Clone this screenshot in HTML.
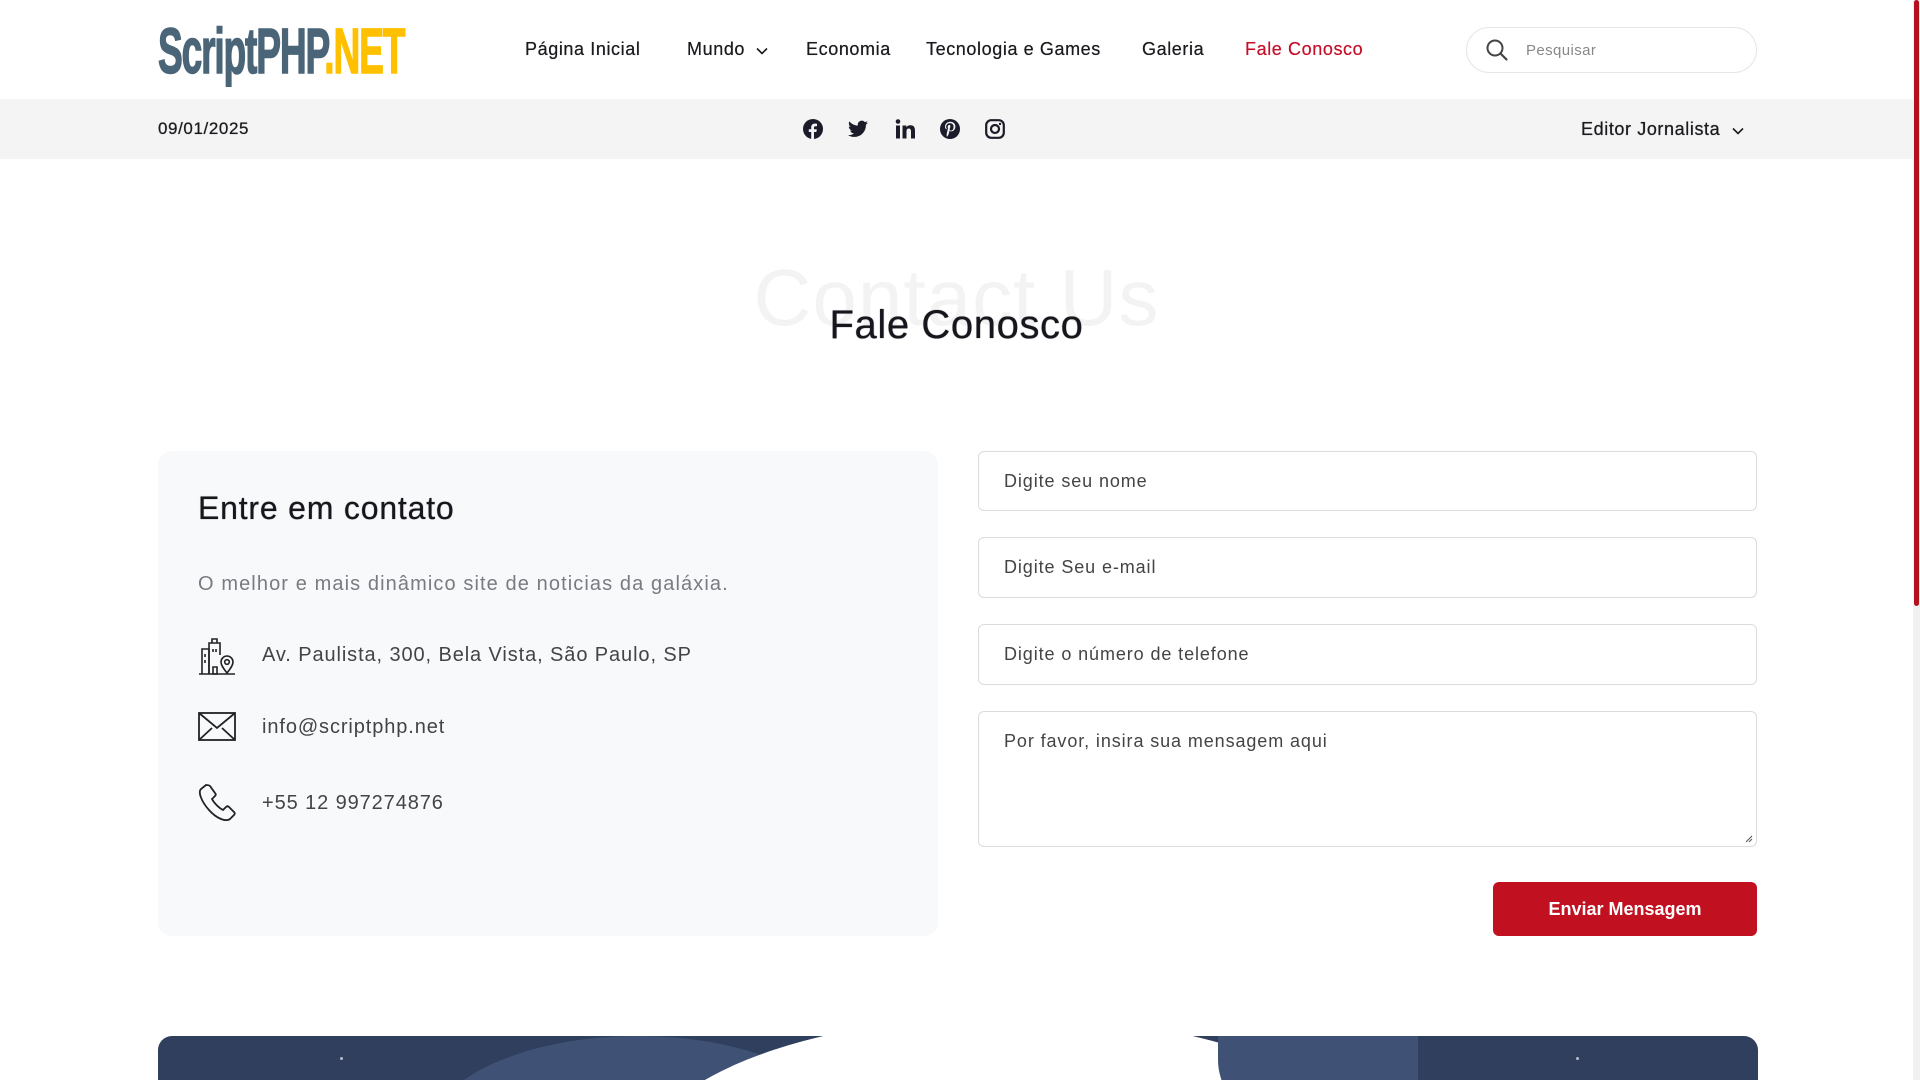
<!DOCTYPE html>
<html><head><meta charset="utf-8"><style>
*{margin:0;padding:0;box-sizing:border-box}
html,body{width:1920px;height:1080px;overflow:hidden}
body{background:#fff;font-family:"Liberation Sans",sans-serif;color:#1b1b1f;position:relative}
.abs{position:absolute}
.nav a{position:absolute;top:39px;font-size:18px;color:#1b1b1f;text-decoration:none;white-space:nowrap;letter-spacing:0.6px;text-shadow:0 0 0.5px #1b1b1f}
.topbar{position:absolute;left:0;top:99px;width:1913px;height:60px;background:#f4f4f4}
.inp{position:absolute;left:978px;width:779px;border:1px solid #dcdcdc;border-radius:6px;background:#fff;font-size:18px;color:#444;padding-left:25px;letter-spacing:0.9px}
.row{position:absolute;left:198px;font-size:20px;color:#444;letter-spacing:0.9px}
.row span{position:absolute;left:64px;white-space:nowrap}
</style></head><body>
<div class="abs" style="left:158px;top:16px;height:70px;width:260px;overflow:visible">
<div style="font-family:'Liberation Sans Narrow','Liberation Sans',sans-serif;font-weight:bold;font-size:64px;line-height:70px;letter-spacing:-2px;transform:scaleX(0.58);transform-origin:left;white-space:nowrap;color:#4a6478;-webkit-text-stroke:1.5px #4a6478">ScriptPHP<span style="color:#ffc000;-webkit-text-stroke:1.5px #ffc000">.NET</span></div>
</div>
<div class="nav">
<a style="left:525px">Página Inicial</a>
<a style="left:687px">Mundo <svg width="12" height="8" viewBox="0 0 12 8" style="margin-left:5px"><path d="M1 1.5l5 5 5-5" fill="none" stroke="#1b1b1f" stroke-width="1.6"/></svg></a>
<a style="left:806px">Economia</a>
<a style="left:926px">Tecnologia e Games</a>
<a style="left:1142px">Galeria</a>
<a style="left:1245px;color:#c4102b;text-shadow:0 0 0.5px #c4102b">Fale Conosco</a>
</div>
<div class="abs" style="left:1466px;top:27px;width:291px;height:46px;border:1px solid #e6e6e6;border-radius:23px">
<svg class="abs" style="left:18px;top:10px" width="24" height="24" viewBox="0 0 24 24"><circle cx="10" cy="10" r="7.5" fill="none" stroke="#444" stroke-width="2"/><path d="M15.5 15.5l6 6" stroke="#444" stroke-width="2.2" stroke-linecap="round"/></svg>
<div class="abs" style="left:59px;top:14px;font-size:15px;color:#888;letter-spacing:0.4px">Pesquisar</div>
</div>
<div class="topbar">
<div class="abs" style="left:158px;top:20px;font-size:17px;letter-spacing:0.6px;text-shadow:0 0 0.6px #1b1b1f">09/01/2025</div>
<svg class="abs" style="left:803px;top:20px" width="20" height="20" viewBox="0 0 20 20"><circle cx="10" cy="10" r="10" fill="#1b1b2a"/><path d="M11 20v-7h2.4l.4-2.8H11V8.5c0-.8.3-1.3 1.4-1.3H14V4.7c-.3 0-1.2-.1-2.2-.1-2.2 0-3.6 1.3-3.6 3.7v1.9H5.8V13h2.4v7z" fill="#f4f4f4"/></svg>
<svg class="abs" style="left:848px;top:21px" width="20" height="18" viewBox="0 0 24 20"><path d="M24 2.4c-.9.4-1.8.7-2.8.8 1-.6 1.8-1.6 2.2-2.7-1 .6-2 1-3.1 1.2C19.3.7 18 0 16.6 0c-2.7 0-4.9 2.2-4.9 4.9 0 .4 0 .8.1 1.1C7.7 5.8 4.1 3.9 1.7.9c-.4.7-.7 1.6-.7 2.5 0 1.7.9 3.2 2.2 4.1-.8 0-1.6-.2-2.2-.6v.1c0 2.4 1.7 4.4 3.9 4.8-.4.1-.8.2-1.3.2-.3 0-.6 0-.9-.1.6 2 2.4 3.4 4.6 3.4-1.7 1.3-3.8 2.1-6.1 2.1-.4 0-.8 0-1.2-.1 2.2 1.4 4.8 2.2 7.5 2.2 9.1 0 14-7.5 14-14v-.6c1-.7 1.8-1.6 2.4-2.5z" fill="#1b1b2a"/></svg>
<svg class="abs" style="left:895px;top:20px" width="20" height="20" viewBox="0 0 20 20"><rect x="1" y="6.5" width="4" height="13" fill="#1b1b2a"/><circle cx="3" cy="2.5" r="2.3" fill="#1b1b2a"/><path d="M7.5 6.5h3.8v1.8c.6-1.1 2-2.1 4-2.1 4 0 4.7 2.6 4.7 6v7.3h-4v-6.5c0-1.5 0-3.5-2.1-3.5s-2.4 1.6-2.4 3.4v6.6h-4z" fill="#1b1b2a"/></svg>
<svg class="abs" style="left:940px;top:20px" width="20" height="20" viewBox="0 0 20 20"><circle cx="10" cy="10" r="10" fill="#1b1b2a"/><path d="M9.3 12.6c-.4 2-1 3.9-2.2 5l-.4-.1c-.1-1.6 0-2.7.4-4.4l.9-3.8s-.3-.5-.3-1.3c0-1.2.7-2.1 1.6-2.1.7 0 1.1.6 1.1 1.2 0 .8-.5 1.9-.7 2.9-.2.9.4 1.6 1.3 1.6 1.5 0 2.6-1.6 2.6-4 0-2.1-1.5-3.5-3.6-3.5-2.5 0-3.9 1.8-3.9 3.7 0 .8.3 1.6.7 2l-.2.7c-1-.5-1.6-1.7-1.6-2.8 0-2.6 1.9-5 5.4-5 2.8 0 5 2 5 4.7 0 2.8-1.8 5-4.2 5-.8 0-1.6-.4-1.9-.9z" fill="#f4f4f4"/></svg>
<svg class="abs" style="left:985px;top:20px" width="20" height="20" viewBox="0 0 20 20"><rect x="1.2" y="1.2" width="17.6" height="17.6" rx="5" fill="none" stroke="#1b1b2a" stroke-width="2.2"/><circle cx="10" cy="10" r="4" fill="none" stroke="#1b1b2a" stroke-width="2.2"/><circle cx="15" cy="5" r="1.2" fill="#1b1b2a"/></svg>
<div class="abs" style="left:1581px;top:20px;font-size:18px;white-space:nowrap;letter-spacing:0.6px;text-shadow:0 0 0.6px #1b1b1f">Editor Jornalista <svg width="12" height="8" viewBox="0 0 12 8" style="margin-left:6px"><path d="M1 1.5l5 5 5-5" fill="none" stroke="#1b1b1f" stroke-width="1.6"/></svg></div>
</div>
<div class="abs" style="left:0;width:1913px;top:252px;text-align:center;font-size:80px;color:#f3f3f3;letter-spacing:1px">Contact Us</div>
<div class="abs" style="left:0;width:1913px;top:303px;text-align:center;font-size:40px;color:#16161c;letter-spacing:0.6px;text-shadow:0 0 0.8px #16161c">Fale Conosco</div>
<div class="abs" style="left:158px;top:451px;width:780px;height:485px;background:#f8f9fb;border-radius:14px"></div>
<div class="abs" style="left:198px;top:490px;font-size:32px;color:#16161c;letter-spacing:0.8px;text-shadow:0 0 0.7px #16161c">Entre em contato</div>
<div class="abs" style="left:198px;top:573px;font-size:20px;color:#7a7a82;letter-spacing:1.1px">O melhor e mais dinâmico site de noticias da galáxia.</div>
<div class="row" style="top:637px"><svg width="38" height="38" viewBox="0 0 38 38" fill="none" stroke="#222" stroke-width="1.6"><path d="M1 37h36"/><path d="M4 37V12h7V37"/><path d="M11 37V6h11v12"/><path d="M14 6V2h5v4"/><path d="M15 12v3M18 12v3M7 17v3M7 23v3M15 30v7h4v-7z"/><path d="M29 36c-4-5-6-8-6-11a6 6 0 0112 0c0 3-2 6-6 11z"/><circle cx="29" cy="25" r="2.3"/></svg><span style="top:7px">Av. Paulista, 300, Bela Vista, São Paulo, SP</span></div>
<div class="row" style="top:712px"><svg width="38" height="30" viewBox="0 0 38 30" fill="none" stroke="#222" stroke-width="1.8"><rect x="1" y="1" width="36" height="27"/><path d="M1 1l18 15 18-15M1 28l13-12M37 28l-13-12"/></svg><span style="top:4px">info@scriptphp.net</span></div>
<div class="row" style="top:783px"><svg width="38" height="38" viewBox="0 0 38 38" fill="none" stroke="#222" stroke-width="1.8"><path d="M8 2l-5 4c-3 3 0 12 8 21s17 12 21 9l4-4c1-1 1-2 0-3l-5-5c-1-1-2-1-3 0l-3 3c-4-2-9-7-11-11l3-3c1-1 1-2 0-3l-5-7c-1-1-3-1-4-1z"/></svg><span style="top:9px">+55 12 997274876</span></div>
<div class="inp" style="top:451px;height:60px;line-height:58px">Digite seu nome</div>
<div class="inp" style="top:537px;height:61px;line-height:59px">Digite Seu e-mail</div>
<div class="inp" style="top:624px;height:61px;line-height:59px">Digite o número de telefone</div>
<div class="inp" style="top:711px;height:136px;padding-top:19px">Por favor, insira sua mensagem aqui
<svg class="abs" style="right:3px;bottom:3px" width="10" height="10" viewBox="0 0 10 10"><path d="M9 3L3 9M9 6L6 9" stroke="#555" stroke-width="1"/></svg></div>
<div class="abs" style="left:1493px;top:882px;width:264px;height:54px;background:#c1101f;border-radius:6px;color:#fff;font-size:18px;font-weight:bold;text-align:center;line-height:54px">Enviar Mensagem</div>
<div class="abs" style="left:158px;top:1036px;width:1600px;height:44px;background:#2f3f5d;border-radius:14px 14px 0 0;overflow:hidden">
<div class="abs" style="left:270px;top:0;width:420px;height:200px;border-radius:50%;background:#3f5275"></div>
<div class="abs" style="left:480px;top:-20px;width:740px;height:300px;border-radius:50%;background:#fff"></div>
<div class="abs" style="left:1060px;top:0;width:200px;height:120px;border-radius:0 0 0 80%;background:#3f5275"></div>
<div class="abs" style="left:182px;top:21px;width:3px;height:3px;background:#bbc;border-radius:50%"></div>
<div class="abs" style="left:1418px;top:21px;width:3px;height:3px;background:#bbc;border-radius:50%"></div>
</div>
<div class="abs" style="left:1913px;top:0;width:7px;height:1080px;background:#f1f1f1"></div>
<div class="abs" style="left:1914px;top:0;width:5px;height:606px;background:#b5101d;border-radius:3px"></div>
</body></html>
